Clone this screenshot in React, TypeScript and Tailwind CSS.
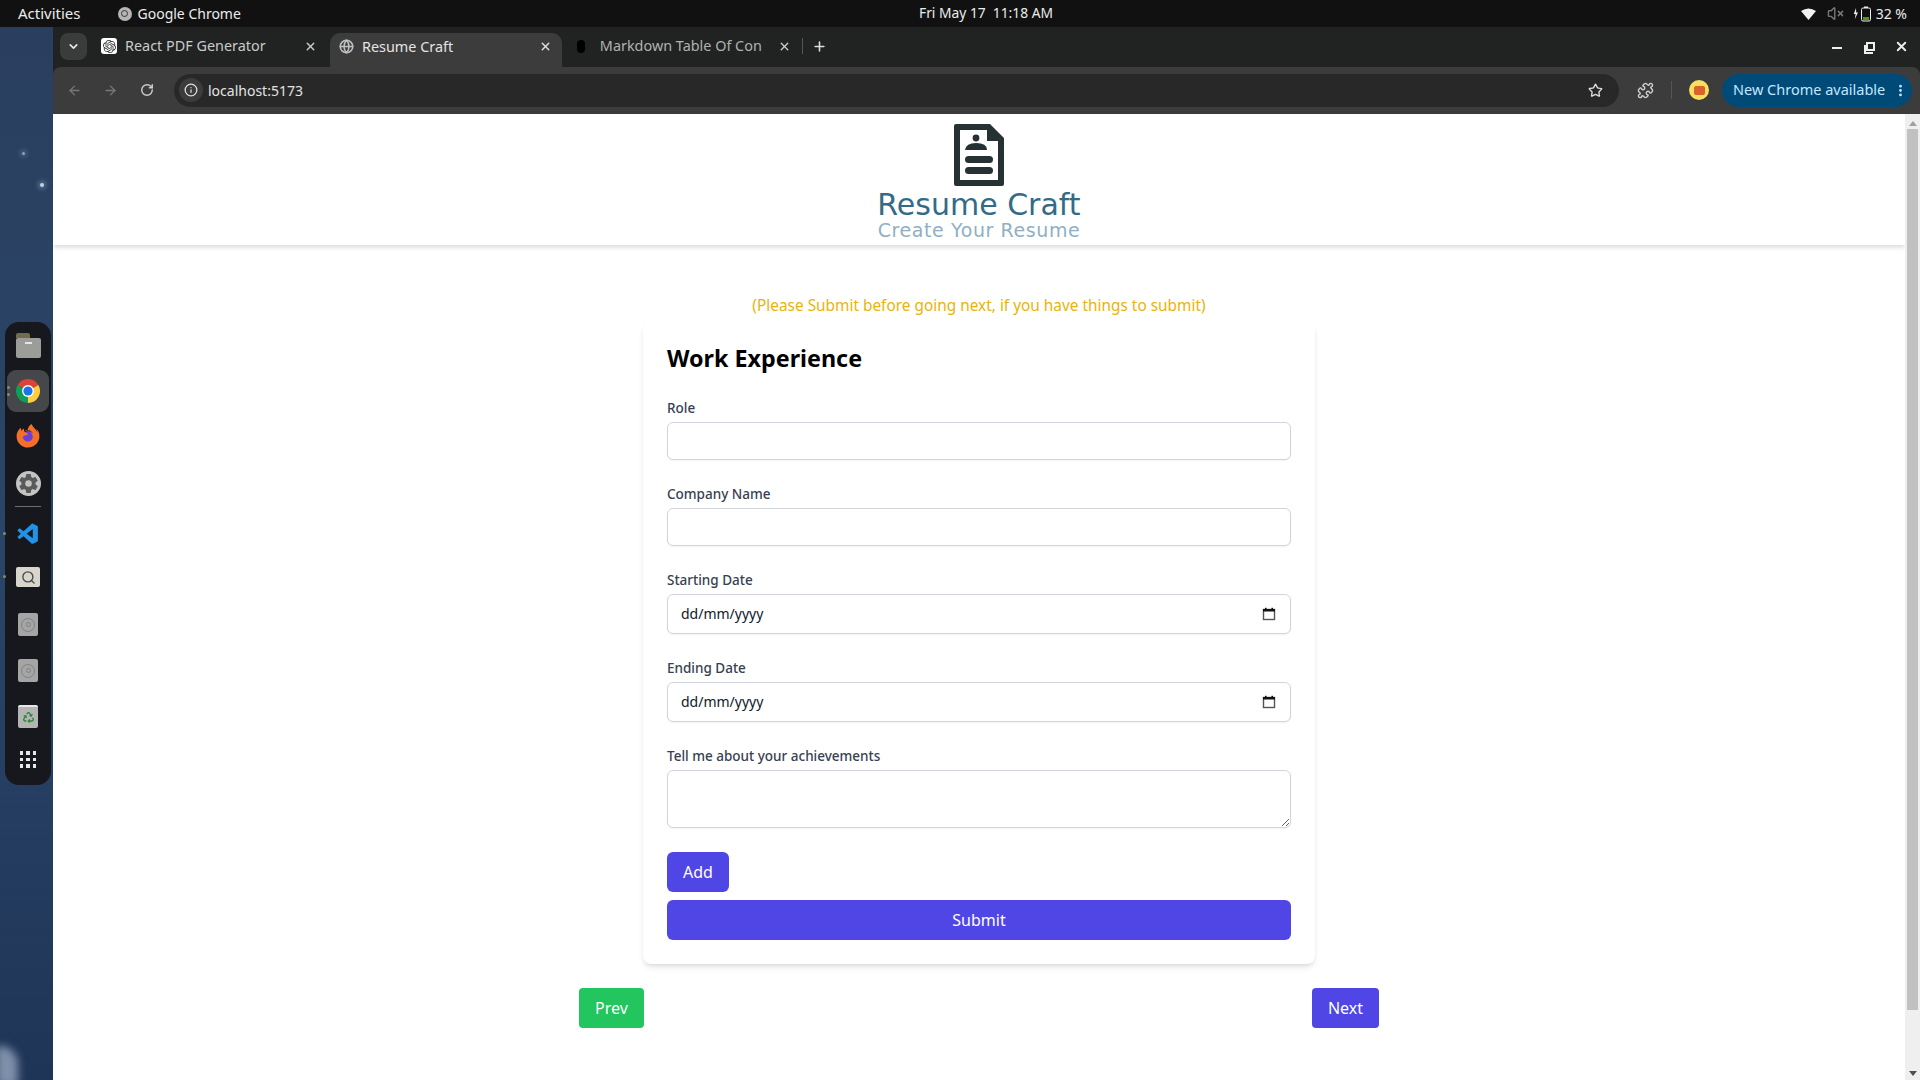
import {
  ArrowLeft,
  ArrowRight,
  ChevronDown,
  EllipsisVertical,
  Globe,
  Info,
  Plus,
  Puzzle,
  RotateCw,
  Search,
  Star,
  VolumeX,
  X,
} from "lucide-react";
import { SiOpenai } from "react-icons/si";
import { VscVscode } from "react-icons/vsc";
import { FaFirefoxBrowser, FaRecycle } from "react-icons/fa";
import { IoSettingsSharp } from "react-icons/io5";

const FONT = "font-['Noto_Sans',sans-serif]";

const ChromeLogo = ({ size = 26 }: { size?: number }) => (
  <svg width={size} height={size} viewBox="0 0 48 48">
    <path d="M24 24 L43.1 13 A22 22 0 0 0 4.9 13 Z" fill="#db4437" />
    <path d="M24 24 L4.9 13 A22 22 0 0 0 24 46 Z" fill="#0f9d58" />
    <path d="M24 24 L24 46 A22 22 0 0 0 43.1 13 Z" fill="#ffcd40" />
    <circle cx="24" cy="24" r="11" fill="#fff" />
    <circle cx="24" cy="24" r="8.5" fill="#1a73e8" />
  </svg>
);

const DiscIcon = () => (
  <div className="flex h-[23px] w-[20px] items-center justify-center rounded-[2px] bg-[#a5a5a5]">
    <div className="flex h-[14px] w-[14px] items-center justify-center rounded-full border border-[#828282]">
      <div className="h-[5px] w-[5px] rounded-full border border-[#828282]" />
    </div>
  </div>
);

const DockDot = ({ top }: { top: string }) => (
  <span className={`absolute left-[-4px] h-[3px] w-[3px] rounded-full bg-[#8a8a6a] ${top}`} />
);

function Dock() {
  return (
    <div className="ml-[5px] flex h-[463px] w-[46px] flex-col items-center rounded-[14px] bg-[#16181d] pt-[11px]">
      <div className="flex h-[26px] w-[25px] flex-col">
        <div className="h-[5px] w-[14px] rounded-t-[2px] bg-[#6f6c50]" />
        <div className="flex h-[20px] w-[25px] items-start justify-center rounded-[2px] bg-[#9c9c98] pt-[4px]">
          <div className="h-[2px] w-[7px] bg-[#e5e5e5]" />
        </div>
      </div>
      <div className="relative mt-[11px] flex h-[42px] w-[42px] items-center justify-center rounded-[9px] bg-[#45474b]">
        <span className="absolute left-0 top-[16px] h-[3px] w-[3px] rounded-full bg-[#8a8a6a]" />
        <span className="absolute left-0 top-[23px] h-[3px] w-[3px] rounded-full bg-[#8a8a6a]" />
        <ChromeLogo />
      </div>
      <div className="relative mt-[12px] flex h-[24px] w-[24px] items-center justify-center">
        <span className="absolute left-[6px] top-[7px] h-[13px] w-[13px] rounded-full bg-[#6b3fd6]" />
        <FaFirefoxBrowser className="relative text-[#f3702a]" size={24} />
      </div>
      <div className="mt-[23px] flex h-[25px] w-[25px] items-center justify-center rounded-full bg-[#c4c4c4]">
        <IoSettingsSharp className="text-[#5a5a5a]" size={21} />
      </div>
      <div className="mt-[10px] h-px w-[26px] bg-[#6c6e72]" />
      <div className="relative mt-[15px] flex h-[24px] w-[42px] items-center justify-center">
        <DockDot top="top-[10px]" />
        <VscVscode className="text-[#2391e6]" size={25} />
      </div>
      <div className="relative mt-[19px] flex h-[24px] w-[42px] items-center justify-center">
        <DockDot top="top-[10px]" />
        <div className="flex h-[20px] w-[24px] items-center justify-center rounded-[2px] bg-[#d8d6cc]">
          <Search size={15} strokeWidth={2.2} className="text-[#4a4a4a]" />
        </div>
      </div>
      <div className="mt-[24px]">
        <DiscIcon />
      </div>
      <div className="mt-[23px]">
        <DiscIcon />
      </div>
      <div className="mt-[23px] flex h-[23px] w-[20px] items-center justify-center rounded-[2px] border-t-2 border-[#e8e8e8] bg-[#b4b4b4]">
        <FaRecycle className="text-[#2d8a35]" size={11} />
      </div>
      <div className="mt-[23px] grid grid-cols-3 gap-[3px]">
        {Array.from({ length: 9 }).map((_, i) => (
          <span key={i} className="h-[3.5px] w-[3.5px] bg-[#e8e8e8]" />
        ))}
      </div>
    </div>
  );
}

function TopBar() {
  return (
    <div className={`relative flex h-[27px] shrink-0 items-center bg-[#111111] text-[14px] text-[#ececec] ${FONT}`}>
      <span className="ml-[18px] text-[15px]">Activities</span>
      <span className="ml-[37px] flex h-[14px] w-[14px] items-center justify-center rounded-full bg-[#b5b5b5]">
        <span className="h-[7px] w-[7px] rounded-full border border-[#333]" />
      </span>
      <span className="ml-[6px]">Google Chrome</span>
      <span className="absolute left-[919px] text-[13.8px]">Fri May 17&nbsp;&nbsp;11:18 AM</span>
      <div className="ml-auto flex items-center pr-[13px]">
        <svg width="15" height="12" viewBox="0 0 15 12" className="mr-[11px]">
          <path d="M0 3 Q7.5 -2 15 3 L7.5 12 Z" fill="#f2f2f2" />
        </svg>
        <VolumeX size={17} className="mr-[9px] text-[#777]" />
        <svg width="19" height="16" viewBox="0 0 19 16" className="mr-[4px]">
          <path d="M3 2 L0.8 8 H2.6 L1.8 13 L5 6.5 H3.2 Z" fill="#eee" />
          <rect x="8.5" y="2" width="9" height="13" rx="1.5" fill="none" stroke="#eee" />
          <rect x="11" y="0.5" width="4" height="1.5" fill="#eee" />
          <rect x="10" y="11" width="6" height="3" fill="#4e9a06" />
        </svg>
        <span className="text-[14px]">32 %</span>
      </div>
    </div>
  );
}

function TabStrip() {
  return (
    <div className={`relative flex h-[40px] shrink-0 items-end text-[14.4px] text-[#c9cbca] ${FONT}`}>
      <div className="mb-[7px] ml-[7px] flex h-[27px] w-[27px] items-center justify-center rounded-[8px] bg-[#3a3c3c] text-[#e6e6e6]">
        <ChevronDown size={13} strokeWidth={3} />
      </div>
      <div className="flex h-[34px] w-[243px] items-center pb-[8px] pl-[14px] pr-[13px]">
        <span className="flex h-[16px] w-[16px] items-center justify-center rounded-[3px] bg-white text-[#333]">
          <SiOpenai size={13} />
        </span>
        <span className="ml-[8px]">React PDF Generator</span>
        <X size={13} strokeWidth={2.5} className="ml-auto text-[#ccc]" />
      </div>
      <div className="flex h-[34px] w-[232px] items-center rounded-t-[10px] bg-[#3c3c3c] pb-[7px] pl-[9px] pr-[10px] text-[#e4e4e4]">
        <Globe size={15} className="text-[#bfc1c1]" strokeWidth={2.5} />
        <span className="ml-[8px]">Resume Craft</span>
        <X size={13} strokeWidth={2.5} className="ml-auto text-[#e0e0e0]" />
      </div>
      <div className="flex h-[34px] w-[265px] items-center pb-[8px] pl-[15px]">
        <span className="h-[13px] w-[8px] rounded-full bg-black" />
        <span className="ml-[15px] w-[170px] overflow-hidden whitespace-nowrap text-[#b0b2b1]">Markdown Table Of Con</span>
        <X size={13} strokeWidth={2.5} className="ml-[11px] shrink-0 text-[#ccc]" />
        <span className="ml-[11px] h-[16px] w-px shrink-0 bg-[#555]" />
        <Plus size={15} strokeWidth={2.5} className="ml-[9px] shrink-0 text-[#ddd]" />
      </div>
      <div className="ml-auto mb-[4px] flex h-[34px] items-center pr-[11px] text-[#eee]">
        <span className="mt-[4px] h-[2px] w-[10px] bg-[#eee]" />
        <span className="relative ml-[24px] h-[9px] w-[9px] border-2 border-[#eee]">
          <span className="absolute left-[-4px] top-[1px] h-[9px] w-[9px] border-b-2 border-l-2 border-[#eee]" />
        </span>
        <X size={15} strokeWidth={3} className="ml-[19px]" />
      </div>
    </div>
  );
}

function Toolbar() {
  return (
    <div className={`flex h-[47px] shrink-0 items-center rounded-t-[8px] bg-[#3c3c3c] pb-[1px] text-[#c9c9c9] ${FONT}`}>
      <ArrowLeft size={15} strokeWidth={2.2} className="ml-[14px] text-[#777]" />
      <ArrowRight size={15} strokeWidth={2.2} className="ml-[21px] text-[#777]" />
      <RotateCw size={14} strokeWidth={2.5} className="ml-[22px] text-[#ccc]" />
      <div className="ml-[20px] flex h-[33px] w-[1445px] items-center rounded-full bg-[#282828]">
        <div className="ml-[5px] flex h-[24px] w-[24px] items-center justify-center rounded-full bg-[#3c3c3c]">
          <Info size={14} strokeWidth={2.2} className="text-[#ddd]" />
        </div>
        <span className="ml-[5px] text-[14px] text-[#e3e3e3]">localhost:5173</span>
        <Star size={15} strokeWidth={2.2} className="ml-auto mr-[16px] text-[#ddd]" />
      </div>
      <Puzzle size={17} strokeWidth={2} className="ml-[18px] text-[#ccc]" />
      <span className="ml-[17px] h-[18px] w-px bg-[#555]" />
      <div className="ml-[17px] flex h-[20px] w-[20px] items-center justify-center rounded-full bg-[#f8df62]">
        <span className="h-[9px] w-[11px] rounded-[2px] bg-[#d9622b]" />
      </div>
      <div className="ml-[13px] flex h-[33px] w-[190px] items-center rounded-full bg-[#004a77] pl-[11px] text-[14.5px] text-[#c2e7ff]">
        New Chrome available
        <EllipsisVertical size={15} strokeWidth={2.5} className="ml-auto mr-[4px]" />
      </div>
    </div>
  );
}

const Label = ({ children }: { children: string }) => (
  <label className="mb-1 block h-[20px] text-[13.5px] font-medium leading-5 text-[#374151]">{children}</label>
);

const TextField = ({ label }: { label: string }) => (
  <div className="mb-6">
    <Label>{label}</Label>
    <input
      type="text"
      className="block h-[38px] w-full rounded-md border border-[#d1d5db] bg-white px-3 shadow-[0_1px_2px_rgba(0,0,0,0.05)]"
    />
  </div>
);

const DateField = ({ label }: { label: string }) => (
  <div className="mb-6">
    <Label>{label}</Label>
    <div className="flex h-[40px] w-full items-center rounded-md border border-[#d1d5db] bg-white pb-[1px] pl-[13px] pr-[14px] text-[14px] text-[#111827] shadow-[0_1px_2px_rgba(0,0,0,0.05)]">
      <span>dd/mm/yyyy</span>
      <svg width="14" height="14" viewBox="0 0 14 14" className="ml-auto">
        <rect x="1.5" y="2.5" width="11" height="10" fill="none" stroke="#555" strokeWidth="1.4" />
        <rect x="1" y="2" width="12" height="2.5" fill="#111" />
        <rect x="3" y="0.8" width="1.6" height="2" fill="#111" />
        <rect x="9.4" y="0.8" width="1.6" height="2" fill="#111" />
      </svg>
    </div>
  </div>
);

function Header() {
  return (
    <header className="flex h-[131px] shrink-0 flex-col items-center bg-white pt-[10px] shadow-[0_2px_5px_rgba(0,0,0,0.16)]">
      <svg width="50" height="62" viewBox="0 0 50 62">
        <path
          d="M2 0 H36 L50 14 V60 Q50 62 48 62 H2 Q0 62 0 60 V2 Q0 0 2 0 Z M6 6 V56 H44 V17 H33 V6 Z"
          fill="#263133"
          fillRule="evenodd"
        />
        <circle cx="22" cy="14" r="3.4" fill="#263133" />
        <path d="M11 26 Q12 19 22 19 Q33 19 33 26 Z" fill="#263133" />
        <rect x="11" y="32" width="28" height="7" rx="3.5" fill="#263133" />
        <rect x="11" y="43" width="28" height="7" rx="3.5" fill="#263133" />
      </svg>
      <div className="mt-[7px] font-['DejaVu_Sans',sans-serif] text-[30px] leading-[24px] text-[#336b87]">Resume Craft</div>
      <div className="mt-[1px] font-['DejaVu_Sans',sans-serif] text-[19px] leading-[24px] tracking-[0.6px] text-[#90afc5]">Create Your Resume</div>
    </header>
  );
}

function Scrollbar() {
  return (
    <div className="flex w-[15px] shrink-0 flex-col items-center bg-[#efefef]">
      <div className="mt-[7px] h-0 w-0 border-x-[4px] border-b-[5px] border-x-transparent border-b-[#a0a0a0]" />
      <div className="mt-[3px] h-[881px] w-[11px] bg-[#c1c1c1]" />
      <div className="mt-[61px] h-0 w-0 border-x-[4px] border-t-[5px] border-x-transparent border-t-[#505050]" />
    </div>
  );
}

export default function App() {
  return (
    <div className={`flex h-screen w-full flex-col overflow-hidden ${FONT}`}>
      <TopBar />
      <div className="flex min-h-0 flex-1">
        <aside className="relative w-[53px] shrink-0 overflow-hidden bg-gradient-to-b from-[#2a3f5f] via-[#2a4568] to-[#1f3558] pt-[295px]">
          <span className="absolute left-[22px] top-[125px] h-[3px] w-[3px] rounded-full bg-[#8ea2b9] shadow-[0_0_5px_2px_rgba(150,170,195,0.35)]" />
          <span className="absolute left-[40px] top-[156px] h-[4px] w-[4px] rounded-full bg-[#c3d0e0] shadow-[0_0_5px_2px_rgba(170,190,215,0.4)]" />
          <span className="absolute bottom-[-6px] left-[-4px] h-[40px] w-[22px] rounded-tr-[18px] bg-[#7f90aa] blur-[4px]" />
          <Dock />
        </aside>
        <div className="flex min-w-0 flex-1 flex-col bg-[#202322]">
          <TabStrip />
          <Toolbar />
          <div className="flex min-h-0 flex-1">
            <main className="flex min-w-0 flex-1 flex-col bg-white">
              <Header />
              <p className="mt-[49px] text-center text-[15.4px] leading-6 text-[#eab308]">
                (Please Submit before going next, if you have things to submit)
              </p>
              <section className="mx-auto mt-1 w-[672px] rounded-lg bg-white p-6 shadow-md">
                <h2 className="mb-[28px] text-[23.3px] font-bold leading-6 text-black">Work Experience</h2>
                <TextField label="Role" />
                <TextField label="Company Name" />
                <DateField label="Starting Date" />
                <DateField label="Ending Date" />
                <div className="mb-6">
                  <Label>Tell me about your achievements</Label>
                  <textarea className="block h-[58px] w-full rounded-md border border-[#d1d5db] bg-white px-3 shadow-[0_1px_2px_rgba(0,0,0,0.05)]" />
                </div>
                <button type="button" className="block rounded-md bg-[#4f46e5] px-4 py-2 text-base leading-6 text-white">
                  Add
                </button>
                <button type="button" className="mt-2 block w-full rounded-md bg-[#4f46e5] px-4 py-2 text-base leading-6 text-white">
                  Submit
                </button>
              </section>
              <div className="mx-auto mt-6 flex w-[800px] justify-between">
                <button type="button" className="rounded bg-[#22c55e] px-4 py-2 text-base leading-6 text-white">
                  Prev
                </button>
                <button type="button" className="rounded bg-[#4f46e5] px-4 py-2 text-base leading-6 text-white">
                  Next
                </button>
              </div>
            </main>
            <Scrollbar />
          </div>
        </div>
      </div>
    </div>
  );
}
